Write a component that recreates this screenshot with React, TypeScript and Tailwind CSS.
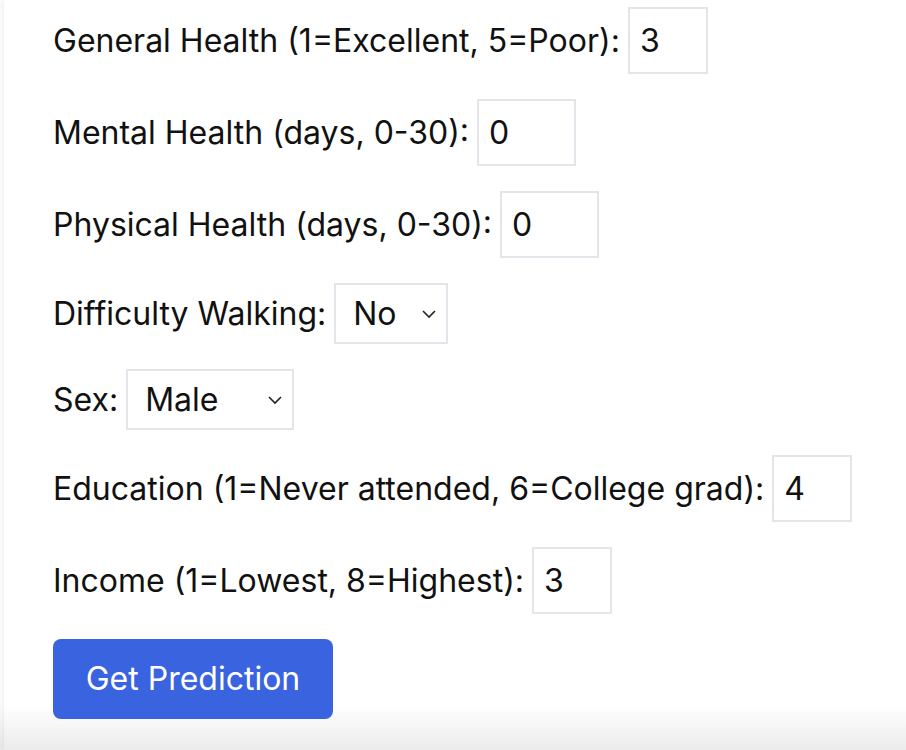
import { useState } from "react";

const font = { fontFamily: "Inter, 'Noto Sans', sans-serif" };

function NumField({ label, value, width }: { label: string; value: string; width: string }) {
  const [v, setV] = useState(value);
  return (
    <div className="flex items-center gap-[8px]">
      <label className="text-[32px] text-[#111]">{label}</label>
      <input
        value={v}
        onChange={(e) => setV(e.target.value)}
        className={`${width} h-[67px] border-2 border-[#e4e4ea] bg-white px-[10px] text-[32px] text-[#111] outline-none`}
      />
    </div>
  );
}

function SelectField({ label, options, width }: { label: string; options: string[]; width: string }) {
  const [v, setV] = useState(options[0]);
  return (
    <div className="flex items-center gap-[8px]">
      <label className="text-[32px] text-[#111]">{label}</label>
      <div className="relative">
        <select
          value={v}
          onChange={(e) => setV(e.target.value)}
          className={`${width} h-[61px] appearance-none border-2 border-[#e4e4ea] bg-white pl-[17px] text-[32px] text-[#111] outline-none`}
        >
          {options.map((o) => (
            <option key={o}>{o}</option>
          ))}
        </select>
        <svg
          className="pointer-events-none absolute right-[11px] top-1/2 -translate-y-1/2"
          width="16"
          height="10"
          viewBox="0 0 16 10"
          fill="none"
        >
          <path d="M2 2l6 6 6-6" stroke="#222" strokeWidth="1.6" />
        </svg>
      </div>
    </div>
  );
}

export default function App() {
  return (
    <div
      className="min-h-screen bg-[linear-gradient(to_bottom,#ffffff_94%,#ebebeb)] pl-[4px]"
      style={font}
    >
      <div className="min-h-screen shadow-[-3px_0_4px_rgba(0,0,0,0.05)] flex flex-col items-start gap-[25px] pl-[49px] pt-[7px]">
        <NumField label="General Health (1=Excellent, 5=Poor):" value="3" width="w-[80px]" />
        <NumField label="Mental Health (days, 0-30):" value="0" width="w-[99px]" />
        <NumField label="Physical Health (days, 0-30):" value="0" width="w-[99px]" />
        <SelectField label="Difficulty Walking:" options={["No", "Yes"]} width="w-[114px]" />
        <SelectField label="Sex:" options={["Male", "Female"]} width="w-[168px]" />
        <NumField label="Education (1=Never attended, 6=College grad):" value="4" width="w-[80px]" />
        <NumField label="Income (1=Lowest, 8=Highest):" value="3" width="w-[80px]" />
        <button className="w-[280px] h-[80px] rounded-[8px] bg-[#3a63e0] text-[32px] text-white">
          Get Prediction
        </button>
      </div>
    </div>
  );
}
